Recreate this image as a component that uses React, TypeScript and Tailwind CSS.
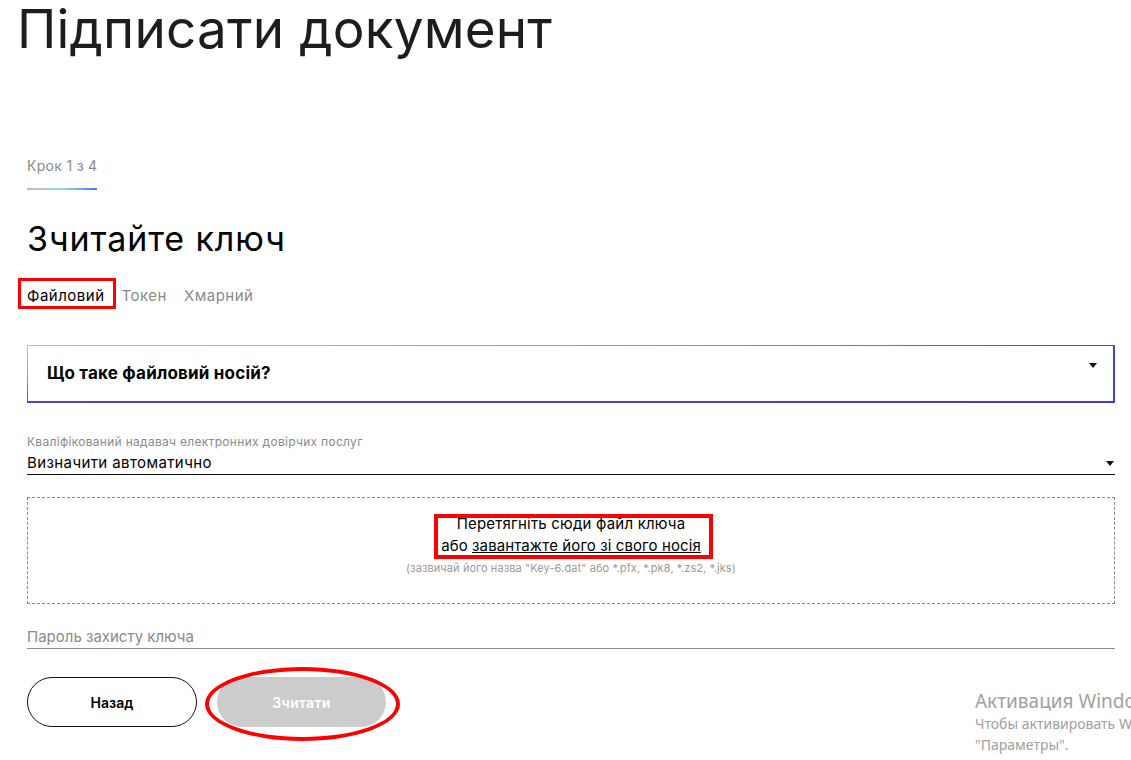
import React from 'react';

const font = { fontFamily: 'Inter, "Noto Sans", sans-serif' };

function Caret({ className = '' }: { className?: string }) {
  return (
    <svg width="8" height="5" viewBox="0 0 8 5" className={className}>
      <path d="M0 0 H8 L4 5 Z" fill="#111" />
    </svg>
  );
}

// gradient-bordered accordion header
function Accordion() {
  return (
    <div className="h-[58px] bg-[linear-gradient(to_bottom_right,#f4a6b3_0%,#9a86e0_30%,#4046dc_50%,#3b3fd8_100%)] pt-[1px] pl-[1px] pr-[2px] pb-[2px]">
      <div className="h-full bg-white flex items-center justify-between pl-[19px] pr-[16px]">
        <span className="text-[17px] font-bold tracking-[0.2px] text-black">Що таке файловий носій?</span>
        <Caret className="-mt-[16px]" />
      </div>
    </div>
  );
}

export default function App() {
  return (
    <div className="relative w-[1131px] h-[760px] overflow-hidden bg-white text-[#111]" style={font}>
      <h1 className="pl-[17px] text-[53px] leading-[58px] font-normal tracking-[0.2px] text-[#1d1d1f]">
        Підписати документ
      </h1>

      <div className="pl-[27px] pr-[16px]">
        <div className="mt-[99px] w-[70px]">
          <div className="whitespace-nowrap text-[14px] tracking-[0.3px] text-[#8a8a8a] leading-[18px]">Крок 1 з 4</div>
          <div className="mt-[13px] h-[2px] bg-gradient-to-r from-[#e0a8b8] via-[#8fe3c3] to-[#3f7bf0]" />
        </div>

        <h2 className="mt-[29px] text-[34px] leading-[40px] tracking-[0.9px] font-normal text-black">Зчитайте ключ</h2>

        <div className="mt-[28px] flex gap-[17px] text-[15px] tracking-[0.5px] leading-[18px]">
          <span className="text-black">Файловий</span>
          <span className="text-[#8a8a8a]">Токен</span>
          <span className="text-[#8a8a8a]">Хмарний</span>
        </div>

        <div className="mt-[40px]">
          <Accordion />
        </div>

        <div className="mt-[32px]">
          <div className="text-[12px] tracking-[0.3px] leading-[14px] text-[#8a8a8a]">
            Кваліфікований надавач електронних довірчих послуг
          </div>
          <div className="mt-[5px] flex items-center justify-between border-b-[1.5px] border-[#111] pb-[2px]">
            <span className="text-[15px] tracking-[0.4px] leading-[18px] text-black">Визначити автоматично</span>
            <Caret className="mr-[1px]" />
          </div>
        </div>

        <div className="mt-[22px] h-[107px] border border-dashed border-[#8a8a8a] flex flex-col items-center justify-center">
          <div className="-mt-[10px] text-[15px] tracking-[0.2px] leading-[22px] text-black text-center">
            Перетягніть сюди файл ключа
          </div>
          <div className="text-[15px] tracking-[0.1px] leading-[21px] text-black">
            або <span className="underline underline-offset-[1px]">завантажте його зі свого носія</span>
          </div>
          <div className="mt-[2px] text-[11px] tracking-[0.1px] leading-[20px] text-[#9a9a9a]">
            (зазвичай його назва "Key-6.dat" або *.pfx, *.pk8, *.zs2, *.jks)
          </div>
        </div>

        <div className="mt-[24px] border-b-[1.5px] border-[#8a8a8a] pb-[3px]">
          <span className="block text-[15px] leading-[17px] text-[#8a8a8a]">Пароль захисту ключа</span>
        </div>

        <div className="mt-[28px] flex gap-[20px]">
          <button className="w-[170px] h-[50px] rounded-full border-[1.5px] border-[#111] bg-white text-[14px] font-semibold text-black">
            Назад
          </button>
          <button className="w-[169px] h-[50px] rounded-full bg-[#cccccc] text-[14px] font-semibold tracking-[0.3px] text-white">
            Зчитати
          </button>
        </div>
      </div>

      {/* red annotations */}
      <div className="absolute left-[18px] top-[278px] w-[98px] h-[31px] border-[3px] border-[#ff0000]" />
      <div className="absolute left-[434px] top-[514px] w-[279px] h-[45px] border-[4px] border-[#ff0000]" />
      <div className="absolute left-[205px] top-[667px] w-[195px] h-[74px] rounded-[50%] border-[4px] border-[#ff0000]" />

      {/* windows activation watermark */}
      <div className="absolute left-[975px] top-[689px] whitespace-nowrap text-[#a0a0a0]" style={{ fontFamily: '"Noto Sans", "Open Sans", sans-serif' }}>
        <div className="text-[19px] leading-[24px]">Активация Windows</div>
        <div className="text-[14px] leading-[21px]">Чтобы активировать Windows, перейдите в раздел</div>
        <div className="text-[14px] leading-[21px]">"Параметры".</div>
      </div>
    </div>
  );
}
